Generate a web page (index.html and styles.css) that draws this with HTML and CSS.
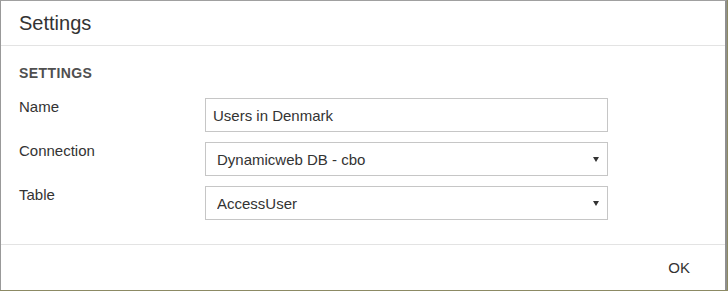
FILE: index.html
```html
<!DOCTYPE html>
<html lang="en">
<head>
    <meta charset="UTF-8">
    <meta name="viewport" content="width=device-width, initial-scale=1.0">
    <title>Settings</title>
    <link rel="stylesheet" href="styles.css">
</head>
<body>
    <div class="dialog">
        <div class="dialog-header">
            <h1>Settings</h1>
        </div>
        <div class="dialog-body">
            <h2>SETTINGS</h2>
            <div class="form-row">
                <label for="name">Name</label>
                <input type="text" id="name" value="Users in Denmark">
            </div>
            <div class="form-row">
                <label for="connection">Connection</label>
                <div class="select-wrap">
                    <select id="connection">
                        <option>Dynamicweb DB - cbo</option>
                    </select>
                </div>
            </div>
            <div class="form-row">
                <label for="table">Table</label>
                <div class="select-wrap">
                    <select id="table">
                        <option>AccessUser</option>
                    </select>
                </div>
            </div>
        </div>
        <div class="dialog-footer">
            <button type="button" class="btn">OK</button>
        </div>
    </div>
</body>
</html>
```

FILE: styles.css
```css
html, body {
    margin: 0;
    height: 291px;
}
body {
    font-family: "Liberation Sans", Arial, sans-serif;
    background-color: #8c8a64;
    overflow: hidden;
}
.dialog {
    width: 724px;
    height: 289px;
    background-color: #fff;
    border-top: 1px solid #a0a0a0;
    border-left: 1px solid #999;
    border-right: 2px solid #8f8f8f;
    display: flex;
    flex-direction: column;
}
.dialog-header {
    height: 44px;
    padding: 0 18px;
    display: flex;
    align-items: center;
    border-bottom: 1px solid #e3e3e3;
}
h1 {
    margin: 0;
    font-size: 20px;
    font-weight: normal;
    color: #333;
}
.dialog-body {
    flex: 1;
    padding: 17px 18px 0;
}
h2 {
    margin: 0 0 15px;
    font-size: 14px;
    line-height: 20px;
    font-weight: bold;
    letter-spacing: 0.4px;
    color: #4f4f4f;
}
.form-row {
    display: grid;
    grid-template-columns: 186px 403px;
    align-items: start;
    margin-bottom: 10px;
}
label {
    font-size: 15px;
    line-height: 16px;
    color: #333;
    padding-top: 1px;
}
input, select {
    width: 100%;
    height: 34px;
    box-sizing: border-box;
    border: 1px solid #c6c6c6;
    border-radius: 0;
    background-color: #fff;
    font-family: inherit;
    font-size: 15px;
    color: #333;
    margin: 0;
    outline: none;
}
input {
    padding: 0 7px;
}
select {
    padding: 0 11px;
    appearance: none;
    -webkit-appearance: none;
}
.select-wrap {
    position: relative;
}
.select-wrap::after {
    content: "";
    position: absolute;
    right: 9px;
    top: 15px;
    border-left: 3px solid transparent;
    border-right: 3px solid transparent;
    border-top: 5px solid #333;
    pointer-events: none;
}
.dialog-footer {
    height: 45px;
    border-top: 1px solid #e3e3e3;
    display: flex;
    align-items: center;
    justify-content: flex-end;
    padding: 0 23px;
}
.btn {
    border: none;
    background: none;
    padding: 6px 12px;
    font-family: inherit;
    font-size: 15px;
    color: #333;
}
```
